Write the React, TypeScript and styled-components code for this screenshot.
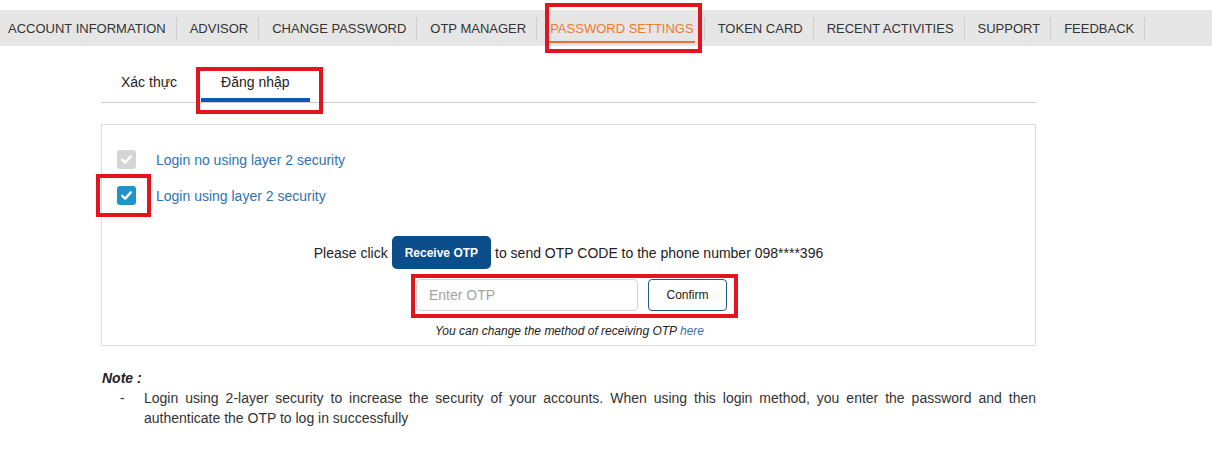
import React from "react";
import styled, { createGlobalStyle } from "styled-components";

const Global = createGlobalStyle`
  html, body { margin: 0; padding: 0; background: #fff; }
  body { font-family: "Liberation Sans", Arial, sans-serif; color: #333; }
  * { box-sizing: border-box; }
`;

const Page = styled.div`
  position: relative;
  width: 1212px;
  height: 450px;
  overflow: hidden;
  padding-top: 10px;
`;

const NavBar = styled.nav`
  display: flex;
  align-items: center;
  height: 36px;
  background: #e6e6e6;
`;

const NavItem = styled.div`
  display: flex;
  align-items: center;
  height: 23px;
  padding: 0 10px 0 13px;
  border-right: 1px solid #cfcfcf;
  font-size: 13px;
  color: #333;
  white-space: nowrap;
  &:first-child { padding-left: 8px; }
`;

const NavLabel = styled.span<{ $active?: boolean }>`
  position: relative;
  line-height: 16px;
  margin-top: 1px;
  color: ${(p) => (p.$active ? "#ef7a30" : "#333")};
  &::after {
    content: "";
    display: ${(p) => (p.$active ? "block" : "none")};
    position: absolute;
    left: -1px;
    right: -1px;
    top: calc(100% + 4px);
    height: 2px;
    background: #e8722a;
  }
`;

const Content = styled.div`
  margin-left: 101px;
  width: 935px;
`;

const TabList = styled.div`
  display: flex;
  margin-top: 14px;
  border-bottom: 1px solid #cccccc;
`;

const Tab = styled.div<{ $active?: boolean }>`
  padding: 14px 20px 8px;
  margin-right: 4px;
  line-height: 16px;
  font-size: 14px;
  color: #222;
  border-bottom: 4px solid ${(p) => (p.$active ? "#0b56b6" : "transparent")};
`;

const Panel = styled.div`
  margin-top: 21px;
  border: 1px solid #dddddd;
  padding: 17px 15px 7px;
`;

const CheckRow = styled.label`
  display: flex;
  align-items: center;
  gap: 20px;
  height: 36px;
  font-size: 14px;
  color: #2f73b3;
`;

const Box = styled.span<{ $on?: boolean }>`
  display: inline-flex;
  align-items: center;
  justify-content: center;
  width: 19px;
  height: 19px;
  margin-top: -2px;
  border-radius: 3px;
  background: ${(p) => (p.$on ? "#1f94cb" : "#d5d5d5")};
`;

const SendRow = styled.div`
  display: flex;
  justify-content: center;
  align-items: center;
  gap: 4px;
  margin-top: 22px;
  font-size: 14px;
  color: #222;
`;

const ReceiveButton = styled.button`
  height: 33px;
  padding: 0 13px;
  border: none;
  border-radius: 5px;
  background: #0b4e8b;
  color: #fff;
  font-family: "Liberation Sans", Arial, sans-serif;
  font-size: 12px;
  font-weight: bold;
`;

const OtpRow = styled.div`
  display: flex;
  justify-content: center;
  gap: 10px;
  margin-top: 10px;
  padding-left: 6px;
`;

const OtpInput = styled.input`
  width: 222px;
  height: 32px;
  padding: 0 12px;
  border: 1px solid #d4d4d4;
  border-radius: 4px;
  font-family: "Liberation Sans", Arial, sans-serif;
  font-size: 14px;
  color: #333;
  &::placeholder { color: #a3a3a3; }
`;

const ConfirmButton = styled.button`
  width: 79px;
  height: 32px;
  border: 1px solid #25568c;
  border-radius: 4px;
  background: #fff;
  color: #222;
  font-family: "Liberation Sans", Arial, sans-serif;
  font-size: 12px;
`;

const Hint = styled.p`
  margin: 13px 0 0;
  text-align: center;
  font-size: 12px;
  line-height: 14px;
  font-style: italic;
  color: #222;
  padding-left: 2px;
`;

const HintLink = styled.a`
  color: #2f73b3;
  text-decoration: none;
`;

const NoteTitle = styled.div`
  margin-top: 22px;
  padding-left: 1px;
  font-size: 14px;
  line-height: 20px;
  font-weight: bold;
  font-style: italic;
  color: #222;
`;

const NoteItem = styled.div`
  display: grid;
  grid-template-columns: 43px 1fr;
  font-size: 14px;
  line-height: 20px;
  color: #333;
`;

const Dash = styled.span`
  padding-left: 19px;
`;

const NoteText = styled.p`
  margin: 0;
  text-align: justify;
`;

const Mark = styled.div<{ $x: number; $y: number; $w: number; $h: number }>`
  position: absolute;
  left: ${(p) => p.$x}px;
  top: ${(p) => p.$y}px;
  width: ${(p) => p.$w}px;
  height: ${(p) => p.$h}px;
  border: 4px solid #e4141e;
  pointer-events: none;
`;

const CheckIcon = () => (
  <svg width="13" height="13" viewBox="0 0 13 13" fill="none">
    <path d="M2.2 6.8 L5.2 9.6 L10.8 3.4" stroke="#fff" strokeWidth="2.4" strokeLinecap="round" strokeLinejoin="round" />
  </svg>
);

const navItems = [
  "ACCOUNT INFORMATION",
  "ADVISOR",
  "CHANGE PASSWORD",
  "OTP MANAGER",
  "PASSWORD SETTINGS",
  "TOKEN CARD",
  "RECENT ACTIVITIES",
  "SUPPORT",
  "FEEDBACK",
];

export default function App() {
  return (
    <Page>
      <Global />
      <NavBar>
        {navItems.map((n) => (
          <NavItem key={n}>
            <NavLabel $active={n === "PASSWORD SETTINGS"}>{n}</NavLabel>
          </NavItem>
        ))}
      </NavBar>
      <Content>
        <TabList>
          <Tab>Xác thực</Tab>
          <Tab $active>Đăng nhập</Tab>
        </TabList>
        <Panel>
          <CheckRow>
            <Box>
              <CheckIcon />
            </Box>
            Login no using layer 2 security
          </CheckRow>
          <CheckRow>
            <Box $on>
              <CheckIcon />
            </Box>
            Login using layer 2 security
          </CheckRow>
          <SendRow>
            <span>Please click</span>
            <ReceiveButton>Receive OTP</ReceiveButton>
            <span>to send OTP CODE to the phone number 098****396</span>
          </SendRow>
          <OtpRow>
            <OtpInput placeholder="Enter OTP" />
            <ConfirmButton>Confirm</ConfirmButton>
          </OtpRow>
          <Hint>
            You can change the method of receiving OTP <HintLink href="#">here</HintLink>
          </Hint>
        </Panel>
        <NoteTitle>Note :</NoteTitle>
        <NoteItem>
          <Dash>-</Dash>
          <NoteText>
            Login using 2-layer security to increase the security of your accounts. When using this login method, you
            enter the password and then authenticate the OTP to log in successfully
          </NoteText>
        </NoteItem>
      </Content>
      <Mark $x={545} $y={3} $w={157} $h={50} />
      <Mark $x={196} $y={67} $w={127} $h={47} />
      <Mark $x={96} $y={174} $w={55} $h={43} />
      <Mark $x={411} $y={274} $w={327} $h={44} />
    </Page>
  );
}
